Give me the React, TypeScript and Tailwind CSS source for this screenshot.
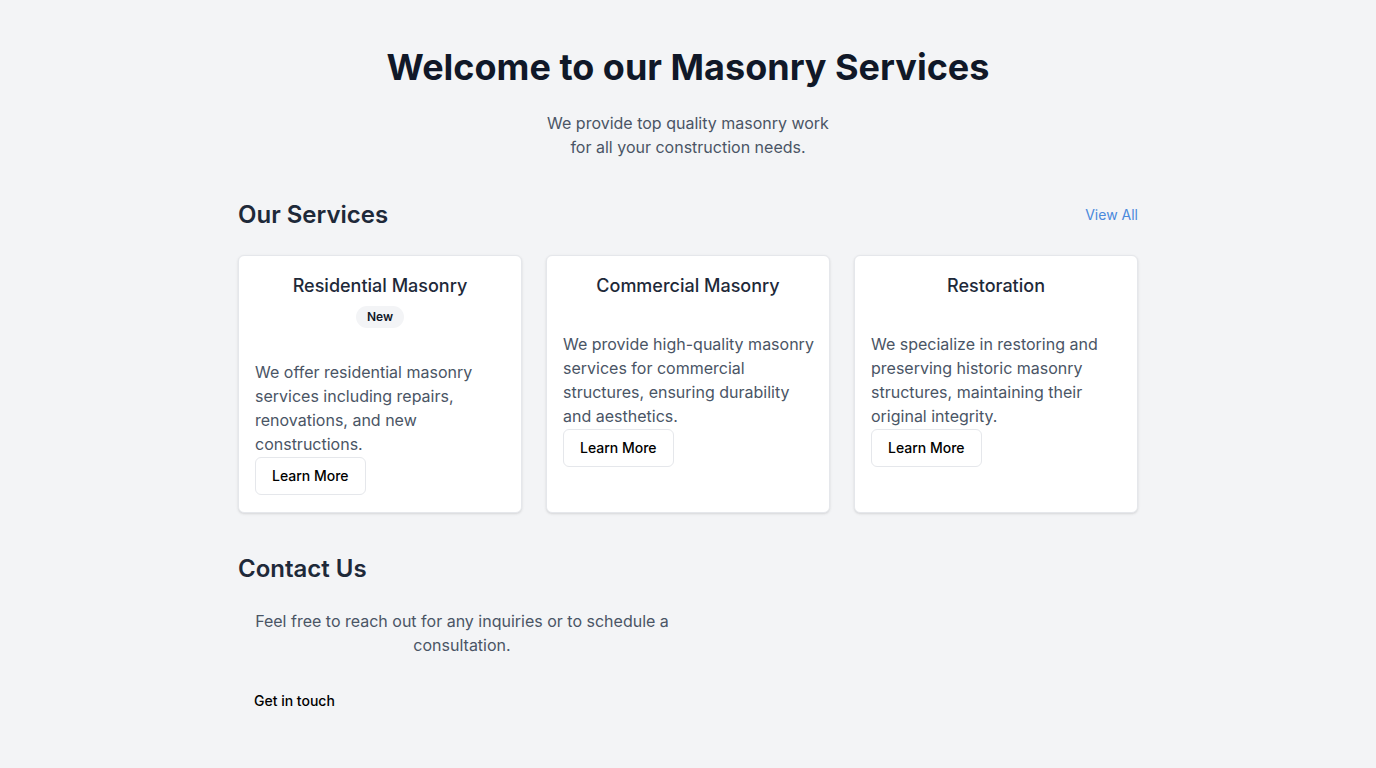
import React from 'react';

interface Service {
  title: string;
  description: string;
  badge?: string;
}

const services: Service[] = [
  {
    title: 'Residential Masonry',
    badge: 'New',
    description:
      'We offer residential masonry services including repairs, renovations, and new constructions.',
  },
  {
    title: 'Commercial Masonry',
    description:
      'We provide high-quality masonry services for commercial structures, ensuring durability and aesthetics.',
  },
  {
    title: 'Restoration',
    description:
      'We specialize in restoring and preserving historic masonry structures, maintaining their original integrity.',
  },
];

const ServiceCard: React.FC<{ service: Service }> = ({ service }) => {
  return (
    <div className="bg-white rounded-md border border-gray-200 shadow-sm px-4 pt-4 pb-[17px]">
      <div className="flex flex-col items-center mb-8">
        <h3 className="text-lg font-medium text-gray-800 leading-7">{service.title}</h3>
        {service.badge && (
          <span className="mt-1.5 inline-flex items-center px-2.5 py-0.5 rounded-full border border-transparent bg-gray-100 text-xs font-semibold text-gray-900">
            {service.badge}
          </span>
        )}
      </div>
      <p className="-mr-1 text-base text-gray-600 leading-6">{service.description}</p>
      <button className="mt-px h-[38px] px-4 rounded-md border border-gray-200 bg-white text-sm font-medium text-black">
        Learn More
      </button>
    </div>
  );
};

export default function App() {
  return (
    <div
      className="min-h-screen bg-gray-100 pt-[47px] pb-12"
      style={{ fontFamily: 'Inter, "Noto Sans", sans-serif' }}
    >
      <div className="w-[900px] mx-auto">
        <header className="text-center">
          <h1 className="text-4xl font-bold text-gray-900 leading-10">
            Welcome to our Masonry Services
          </h1>
          <p className="mt-6 mx-auto max-w-[290px] text-base text-gray-600 leading-6">
            We provide top quality masonry work for all your construction needs.
          </p>
        </header>

        <section className="mt-10">
          <div className="flex items-center justify-between mb-6">
            <h2 className="text-2xl font-semibold text-gray-800 leading-8">Our Services</h2>
            <a href="#" className="text-sm text-[#4a89dc]">
              View All
            </a>
          </div>
          <div className="grid grid-cols-3 gap-6">
            {services.map((s) => (
              <ServiceCard key={s.title} service={s} />
            ))}
          </div>
        </section>

        <section className="mt-10">
          <h2 className="text-2xl font-semibold text-gray-800 leading-8">Contact Us</h2>
          <p className="mt-6 max-w-md text-center text-base text-gray-600 leading-6">
            Feel free to reach out for any inquiries or to schedule a consultation.
          </p>
          <button className="mt-[25px] h-[38px] px-4 rounded-md text-sm font-medium text-black">
            Get in touch
          </button>
        </section>
      </div>
    </div>
  );
}
